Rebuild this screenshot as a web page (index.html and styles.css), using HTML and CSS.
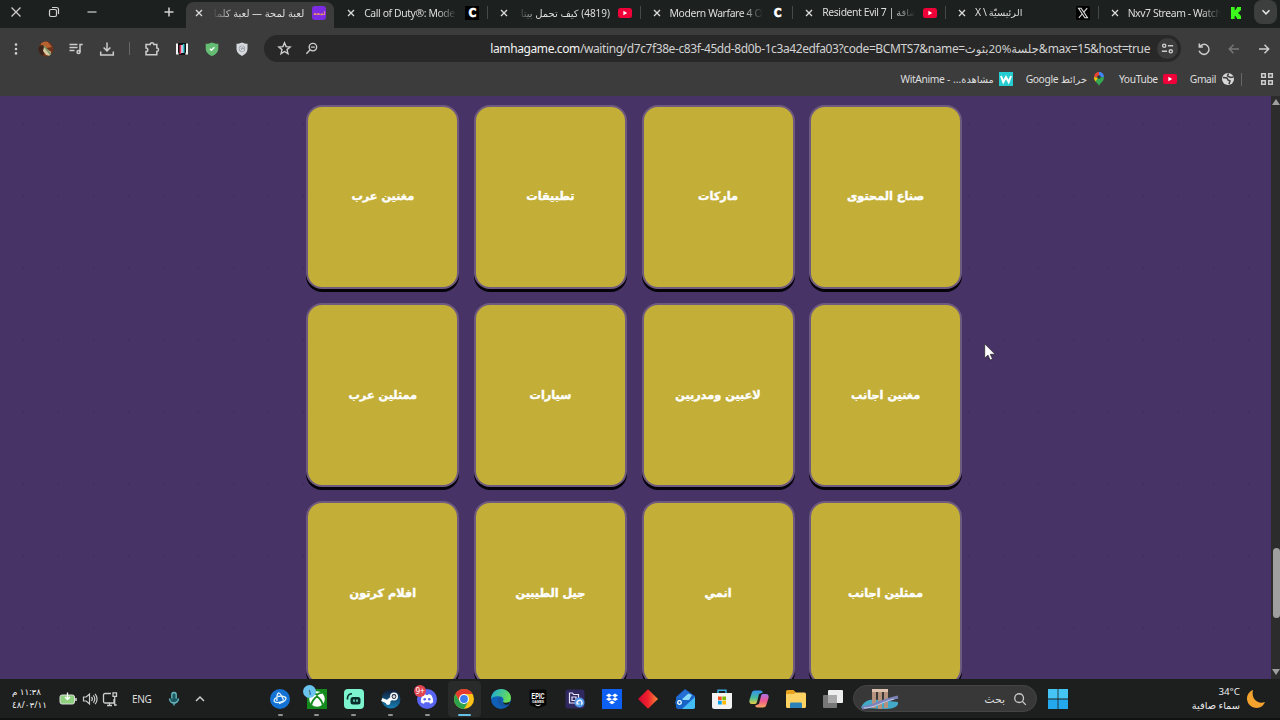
FILE: index.html
```
<!DOCTYPE html>
<html lang="ar">
<head>
  <meta charset="UTF-8" />
  <title>لعبة لمحة — لعبة كلمات</title>
  <meta name="viewport" content="width=device-width, initial-scale=1.0" />
  <link rel="stylesheet" href="styles.css">
</head>
<body>

<!-- Tab strip -->
<header class="tab-strip">
  <div class="window-controls">
    <svg width="12" height="12" viewBox="0 0 12 12"><path d="M1.5 1.5l9 9M10.5 1.5l-9 9"/></svg>
    <svg width="12" height="12" viewBox="0 0 12 12"><rect x="1.5" y="3.5" width="7" height="7" rx="1.5"/><path d="M4 1.5h4.5a2 2 0 0 1 2 2V8"/></svg>
    <svg width="12" height="12" viewBox="0 0 12 12"><path d="M1.5 6h9"/></svg>
    <svg class="new-tab" width="12" height="12" viewBox="0 0 12 12"><path d="M6 1.5v9M1.5 6h9"/></svg>
  </div>
  <nav class="tabs">
    <div class="tab active">
      <svg class="close" viewBox="0 0 8 8"><path d="M1 1l6 6M7 1l-6 6"/></svg>
      <span class="title rtl" dir="rtl">لعبة لمحة — لعبة كلما</span>
      <span class="favicon lamha" dir="rtl">لمحة</span>
    </div>
    <div class="tab">
      <svg class="close" viewBox="0 0 8 8"><path d="M1 1l6 6M7 1l-6 6"/></svg>
      <span class="title">Call of Duty®: Mode</span>
      <span class="favicon cod">C</span>
    </div>
    <div class="tab">
      <svg class="close" viewBox="0 0 8 8"><path d="M1 1l6 6M7 1l-6 6"/></svg>
      <span class="title rtl" dir="rtl">(4819) كيف تحمل بيتا</span>
      <svg class="favicon" viewBox="0 0 14 14"><rect y="2" width="14" height="10" rx="2.5" fill="#f00039"/><path d="M5.4 4.8v4.4L9.2 7z" fill="#fff"/></svg>
    </div>
    <div class="tab">
      <svg class="close" viewBox="0 0 8 8"><path d="M1 1l6 6M7 1l-6 6"/></svg>
      <span class="title">Modern Warfare 4 O</span>
      <span class="favicon cod plain">C</span>
    </div>
    <div class="tab">
      <svg class="close" viewBox="0 0 8 8"><path d="M1 1l6 6M7 1l-6 6"/></svg>
      <span class="title">Resident Evil 7 | <span class="ar">ضافة</span></span>
      <svg class="favicon" viewBox="0 0 14 14"><rect y="2" width="14" height="10" rx="2.5" fill="#f00039"/><path d="M5.4 4.8v4.4L9.2 7z" fill="#fff"/></svg>
    </div>
    <div class="tab">
      <svg class="close" viewBox="0 0 8 8"><path d="M1 1l6 6M7 1l-6 6"/></svg>
      <span class="title">X \ <span class="ar">الرئيسيّة</span></span>
      <svg class="favicon" viewBox="0 0 14 14"><rect width="14" height="14" rx="1.5" fill="#000"/><path d="M2.5 2.2h2.6l6.4 9.6H8.9z" fill="none" stroke="#ddd" stroke-width="1.1"/><path d="M11.2 2.2L7.8 6.2M6.2 8L2.8 11.8" stroke="#ddd" stroke-width="1.1"/></svg>
    </div>
    <div class="tab last">
      <svg class="close" viewBox="0 0 8 8"><path d="M1 1l6 6M7 1l-6 6"/></svg>
      <span class="title">Nxv7 Stream - Watch</span>
      <svg class="favicon" viewBox="0 0 14 14"><path d="M2 1h3.600v3h1.200V2.500H8V1h4v3.500h-1.300V6H9.500v2h1.200v1.500H12V13H8v-1.500H6.800V10H5.600v3H2z" fill="#3bfa1c"/></svg>
    </div>
  </nav>
  <button class="tab-search"><svg width="10" height="10" viewBox="0 0 10 10"><path d="M1.500 3.300L5 6.800l3.500-3.500"/></svg></button>
</header>

<!-- Toolbar -->
<div class="toolbar">
  <div class="tools">
    <svg viewBox="0 0 16 16"><g fill="#ccc"><circle cx="8" cy="3.600" r="1.300"/><circle cx="8" cy="8" r="1.300"/><circle cx="8" cy="12.400" r="1.300"/></g></svg>
    <svg viewBox="0 0 16 16"><clipPath id="av"><circle cx="8" cy="8" r="7.500"/></clipPath><g clip-path="url(#av)"><path fill="#6d321c" d="M0 0h16v16H0z"/><path fill="#b8622f" d="M3 0h6l5 6-5 1-6-3z"/><path fill="#3a241a" d="M0 6l5-2 3 4-4 8H0z"/><path fill="#d8c9a0" d="M6 6l3 2 4 3-1 4-4-1-3-4z"/><path stroke="#739365" stroke-width="1.500" d="M6 5l7 9"/></g></svg>
    <svg class="line" viewBox="0 0 16 16"><path d="M1.500 3.500h8M1.500 6.500h8M1.500 9.500h5M12 11V3.500h2.700"/><circle cx="10.500" cy="11" r="1.500"/></svg>
    <svg class="line" viewBox="0 0 16 16"><path d="M8 1.500v8.300M4.600 6.500L8 9.900l3.400-3.400M1.700 10.500V14h12.600v-3.500"/></svg>
  </div>
  <i class="divider"></i>
  <div class="tools">
    <svg class="line" viewBox="0 0 16 16"><path d="M2 3.500h4.200a1.800 1.800 0 0 1 3.600 0h3V7a1.700 1.700 0 0 1 0 3.400v3.400H2v-3.300a1.800 1.800 0 0 0 0-3.600z"/></svg>
    <svg viewBox="0 0 16 16"><path fill="#f4f4f4" d="M2 2.500h12v11H2z"/><path fill="#111" d="M4 2h8v9l-1 3H5l-1-3z"/><path fill="#e32f61" d="M5.500 4h1.700v9H5.500z"/><path fill="#31c5d9" d="M8.800 3h1.700v9H8.800z"/><path fill="#eef" d="M7.200 4h1.600v8H7.200z"/></svg>
    <svg viewBox="0 0 16 16"><path fill="#64bd72" d="M8 1.500c2 1 4 1.300 6.300 1.300v4.700c0 3.500-2.500 6-6.300 7.500-3.800-1.500-6.300-4-6.300-7.500V2.800C4 2.800 6 2.500 8 1.500z"/><path d="M5.800 7.700l1.600 1.600 3-3" fill="none" stroke="#fff" stroke-width="1.300"/></svg>
    <svg viewBox="0 0 16 16"><path fill="#d5d8dc" d="M8 1.500c2 .9 3.500 1.200 5.500 1.200v5c0 3.300-2 5.600-5.500 7.200-3.500-1.600-5.500-3.900-5.500-7.200v-5C4.500 2.700 6 2.400 8 1.500z"/><circle cx="8" cy="7.700" r="3.200" fill="#a3a8ae"/><path d="M9.800 6.500a2 2 0 1 0 0 2.400H8" fill="none" stroke="#e5e7ea"/></svg>
  </div>
  <div class="address-bar">
    <svg class="line" viewBox="0 0 16 16"><path d="M8 2l1.700 4 4.300.4-3.300 2.800 1 4.300L8 11.200l-3.700 2.300 1-4.300L2 6.400 6.300 6z"/></svg>
    <svg class="line" viewBox="0 0 16 16"><circle cx="9.500" cy="6.500" r="4"/><path d="M6.600 9.400L2.500 13.500M7.500 6.500h4"/></svg>
    <div class="url"><b>lamhagame.com</b>/waiting/d7c7f38e-c83f-45dd-8d0b-1c3a42edfa03?code=BCMTS7&amp;name=<span class="ar">جلسة%20بثوث</span>&amp;max=15&amp;host=true</div>
    <span class="site-info"><svg class="line" viewBox="0 0 16 16"><circle cx="4.500" cy="5" r="1.700"/><path d="M8.500 5H14M2 11h5.500"/><circle cx="11.500" cy="11" r="1.700"/></svg></span>
  </div>
  <div class="tools nav-tools">
    <svg class="line" viewBox="0 0 16 16"><path d="M3.300 2.500v3.600h3.600M3.600 6A5 5 0 1 1 3.200 9.700"/></svg>
    <svg class="line dim" viewBox="0 0 16 16"><path d="M13 8H3.500M7.500 3.800L3.300 8l4.200 4.200"/></svg>
    <svg class="line" viewBox="0 0 16 16"><path d="M3 8h9.500M8.500 3.800L12.700 8l-4.200 4.200"/></svg>
  </div>
</div>

<!-- Bookmarks -->
<div class="bookmarks">
  <a class="bm-wit"><span dir="rtl"><span class="ar">مشاهدة</span>... - WitAnime</span><svg viewBox="0 0 14 14"><path fill="#25cdd0" d="M0 0h14v14H0z"/><path d="M2 4l2.300 6L7 5l2.700 5L12 4" fill="none" stroke="#fff" stroke-width="2"/></svg></a>
  <a class="bm-maps"><span dir="rtl"><span class="ar">خرائط</span> Google</span><svg viewBox="0 0 14 14"><path fill="#34a853" d="M7 14C6.300 11 2 9.500 2 5.200L7 5l5 .2C12 9.500 7.700 11 7 14z"/><path fill="#4285f4" d="M7 0a5 5 0 0 1 4.400 2.800L7 6z"/><path fill="#ea4335" d="M2 5A5 5 0 0 1 7 0v5z"/><path fill="#fbbc04" d="M2 5l4 1-2.500 3.500C2.500 8 2 7 2 5z"/><path fill="#4285f4" d="M7 0a5 5 0 0 1 5 5H7z"/><circle cx="7" cy="5" r="1.800" fill="#333"/></svg></a>
  <a class="bm-yt"><span>YouTube</span><svg viewBox="0 0 14 14"><rect y="2" width="14" height="10" rx="2" fill="#ef0038"/><path d="M5.400 4.800v4.400L9.200 7z" fill="#fff"/></svg></a>
  <a class="bm-gmail"><span>Gmail</span><svg viewBox="0 0 14 14"><circle cx="7" cy="7" r="6" fill="#d7d7d7"/><path d="M2 5.500l4 .5 1 2 2 1-1 3M7.500 1.500L6.500 4l3 1.500 3-.5" fill="none" stroke="#3c3c3c" stroke-width="1.500"/></svg></a>
  <i class="divider"></i>
  <svg class="apps line" viewBox="0 0 14 14"><path d="M1.700 1.700h3.600v3.600H1.700zM8.700 1.700h3.600v3.600H8.700zM1.700 8.700h3.600v3.600H1.700zM8.700 8.700h3.600v3.600H8.700z"/></svg>
</div>

<!-- Game page -->
<main class="page">
  <div class="board">
    <div class="categories" dir="rtl">
      <div class="card">صناع المحتوى</div>
      <div class="card">ماركات</div>
      <div class="card">تطبيقات</div>
      <div class="card">مغنين عرب</div>
      <div class="card">مغنين اجانب</div>
      <div class="card">لاعبين ومدربين</div>
      <div class="card">سيارات</div>
      <div class="card">ممثلين عرب</div>
      <div class="card">ممثلين اجانب</div>
      <div class="card">انمي</div>
      <div class="card">جيل الطيبين</div>
      <div class="card">افلام كرتون</div>
    </div>
  </div>
  <div class="scrollbar">
    <span class="arrow up"></span>
    <span class="thumb"></span>
    <span class="arrow down"></span>
  </div>
  <svg class="cursor" viewBox="0 0 12 18"><path d="M.7.800v14.400l3.300-3.100 2.200 5 2.300-1-2.200-4.800h4.800z" fill="#fff" stroke="#222" stroke-width=".7"/></svg>
</main>

<!-- Taskbar -->
<footer class="taskbar">
  <div class="tray">
    <div class="clock"><span dir="rtl">١١:٣٨ م</span><span>٤٨/٠٣/١١</span></div>
    <svg class="battery" viewBox="0 0 18 16"><rect x="1" y="4" width="14.500" height="9" rx="2" fill="#8ed17f" stroke="#ddd"/><path d="M17 7v3" stroke="#ddd" stroke-width="1.500"/><path d="M8.500 1.500v7M6 6l2.500 2.500L11 6" fill="none" stroke="#fff" stroke-width="1.300"/></svg>
    <svg class="line volume" viewBox="0 0 16 16"><path d="M1.500 6v4h2.700L7.500 13V3L4.200 6zM9.500 6a3 3 0 0 1 0 4M11.300 4.300a5.300 5.300 0 0 1 0 7.400M13 2.800a7.500 7.500 0 0 1 0 10.400"/></svg>
    <svg class="line network" viewBox="0 0 16 16"><path d="M9 2.500H3a1.500 1.500 0 0 0-1.500 1.500v6.500A1.500 1.500 0 0 0 3 12h9V8M5 14.500h5M7.500 12v2.500M11 1.800h3.500v3.500H11zM12.700 5.300V14h2"/></svg>
    <span class="lang">ENG</span>
    <svg class="mic" viewBox="0 0 16 16"><rect x="5.800" y="1.500" width="4.400" height="8.500" rx="2.200"/><path d="M3.500 7.500a4.500 4.500 0 0 0 9 0M8 12v2.500"/></svg>
    <svg class="line chevron" viewBox="0 0 16 16"><path d="M4 10l4-4 4 4"/></svg>
  </div>
  <div class="apps-row">
    <div class="app running">
      <svg viewBox="0 0 20 20"><circle cx="10" cy="10" r="10" fill="#1472d5"/><g fill="none" stroke="#e8f7ff" stroke-width="1.300"><path d="M7 12C6.500 7 7.500 3.500 9 4s4 5 4.500 7.500"/><path d="M7.500 7.500c4-1 8.500 0 8.500 2s-4 4.500-7 5"/><path d="M6.500 8.500C4 10 3.500 12 5 13s6 .5 8.500-1"/></g></svg>
    </div>
    <div class="app running">
      <svg viewBox="0 0 20 20"><path fill="#158a1c" d="M0 0h20v20H0z"/><circle cx="10" cy="10" r="7.800" fill="#fff"/><path d="M4.500 4.200c2-.8 4 .3 5.500 1.600 1.500-1.300 3.500-2.400 5.500-1.600M4.300 15.700C5 12.500 8 9 10 7.600c2 1.400 5 4.900 5.700 8.100" fill="none" stroke="#158a1c" stroke-width="1.800"/></svg>
      <span class="badge blue">١</span>
    </div>
    <div class="app running">
      <svg viewBox="0 0 20 20"><rect width="20" height="20" rx="4" fill="#7cf4cd"/><rect x="6.500" y="8" width="10" height="7.500" rx="2.500" fill="#092d2a"/><path d="M3.500 10.500V9A4.500 4.500 0 0 1 8 4.700" fill="none" stroke="#092d2a" stroke-width="1.600"/><path d="M10 10.500v2.300M13 10.500v2.300" stroke="#7cf4cd" stroke-width="1.500"/></svg>
    </div>
    <div class="app running">
      <svg viewBox="0 0 20 20"><defs><linearGradient id="st" x2="0" y2="1"><stop stop-color="#101b35"/><stop offset="1" stop-color="#187fb5"/></linearGradient></defs><circle cx="10" cy="10" r="9.500" fill="url(#st)"/><path d="M.8 10.500l5.500 2.300 4-3.300" fill="none" stroke="#fff" stroke-width="3.500"/><circle cx="13" cy="7.500" r="3.200" fill="#17243d" stroke="#fff" stroke-width="1.500"/><circle cx="13" cy="7.500" r="1.500" fill="#ddd"/><circle cx="7" cy="13.500" r="2.400" fill="#fff"/></svg>
    </div>
    <div class="app running">
      <svg viewBox="0 0 20 20"><circle cx="10" cy="10" r="10" fill="#5865f2"/><path fill="#fff" d="M5.800 5.900l2.500-.9.600 1h2.200l.6-1 2.500.9c1.500 2.200 2.100 4.800 1.900 7.300-1 .8-2 1.300-3 1.500l-.9-1.400H7.800l-.9 1.400c-1-.2-2-.7-3-1.500-.2-2.500.4-5.100 1.900-7.300z"/><circle cx="7.700" cy="10.300" r="1.300" fill="#5865f2"/><circle cx="12.300" cy="10.300" r="1.300" fill="#5865f2"/></svg>
      <span class="badge red">9+</span>
    </div>
    <div class="app focused">
      <svg viewBox="0 0 20 20"><circle cx="10" cy="10" r="10" fill="#fbc116"/><path fill="#e33b2e" d="M1.340 5A10 10 0 0 1 18.660 5H10l-4.330 7.500z"/><path fill="#2ba24c" d="M1.340 5A10 10 0 0 0 10 20l4.330-7.500-8.660 0z"/><circle cx="10" cy="10" r="5" fill="#fff"/><circle cx="10" cy="10" r="3.900" fill="#3b7ded"/></svg>
    </div>
    <div class="app">
      <svg viewBox="0 0 20 20"><defs><linearGradient id="ed" x2="1" y2=".3"><stop stop-color="#19a7df"/><stop offset="1" stop-color="#67de56"/></linearGradient></defs><circle cx="10" cy="10" r="10" fill="#0f61b8"/><path fill="url(#ed)" d="M0 10C.5 3.500 5 0 10 0c6 0 10 4.500 10 9 0 3.500-2.500 5-5 5-2 0-3.300-.7-3-1.500 1.500-2 0-5-3-5C5 7 1 8 0 10z"/><path fill="#1554a0" d="M8.500 8C6 10 6 15 10 17c3 1.300 6 .5 8-1.500-4 1-7.500-.5-8-3-.2-1.500.7-2 .3-3.300z"/><path fill="#1f1f1f" d="M11.800 12.700c1 1.600 4.200 1.500 7.200 0l-1 2.500c-3 1-6 .3-6.200-2.500z"/></svg>
    </div>
    <div class="app">
      <svg class="epic" viewBox="0 0 20 20"><path fill="#070707" d="M1.500 2A1.500 1.500 0 0 1 3 .500h14A1.500 1.500 0 0 1 18.500 2v14L10 19.500 1.500 16z"/><text x="10" y="9.800" textLength="13" lengthAdjust="spacingAndGlyphs">EPIC</text><text class="small" x="10" y="14" textLength="12" lengthAdjust="spacingAndGlyphs">GAMES</text><path d="M7.500 15.800l2.500 1 2.500-1" fill="none" stroke="#eee"/></svg>
    </div>
    <div class="app">
      <svg viewBox="0 0 20 20"><rect x=".5" y=".5" width="19" height="19" rx="2.500" fill="#302960"/><path d="M4.500 4h3l1 1.500h5V14h-9zM7 8h4v3.500H7z" fill="none" stroke="#e8e5ff" stroke-width="1.200"/><circle cx="14.500" cy="13.500" r="5" fill="#5298e8"/><path d="M12.500 14.800a2.400 2.400 0 1 1 3.600.8M12 12.500v2.500h2.500" fill="none" stroke="#fff" stroke-width="1.200"/></svg>
    </div>
    <div class="app">
      <svg viewBox="0 0 20 20"><path fill="#0e60f3" d="M0 0h20v20H0z"/><path fill="#fff" d="M7 4.500l3 1.900-3 1.900-3-1.900zM13 4.500l3 1.900-3 1.900-3-1.900zM7 8.300l3 1.900-3 1.900-3-1.900zM13 8.300l3 1.900-3 1.900-3-1.900zM10 11.500l3 1.900-3 1.900-3-1.900z"/></svg>
    </div>
    <div class="app">
      <svg viewBox="0 0 20 20"><defs><linearGradient id="dm"><stop stop-color="#cf0832"/><stop offset=".5" stop-color="#f0202c"/><stop offset="1" stop-color="#f58a3a"/></linearGradient></defs><path fill="url(#dm)" d="M10 .3L20 10l-10 9.700L0 10z"/></svg>
    </div>
    <div class="app">
      <svg viewBox="0 0 20 20"><path fill="#1b63c6" d="M1 8l9-8 10 7v11a2 2 0 0 1-2 2H3a2 2 0 0 1-2-2z"/><path fill="#8bdcfa" d="M4 8l6-5 7 3-3 5H5z"/><path fill="#236fd5" d="M2 8l8-7 4 3-9 8z"/><path fill="#43bdf5" d="M20 8v10a2 2 0 0 1-2 2H7z"/><circle cx="4.500" cy="13.500" r="4.300" fill="#1268c9"/><circle cx="4.500" cy="13.500" r="1.800" fill="none" stroke="#fff" stroke-width="1.300"/></svg>
    </div>
    <div class="app">
      <svg viewBox="0 0 20 20"><path d="M6 4V1.300h8V4" fill="none" stroke="#37a9df" stroke-width="1.500"/><path fill="#f3f3f3" d="M0 4h20v13.500a2.500 2.500 0 0 1-2.500 2.500h-15A2.500 2.500 0 0 1 0 17.500z"/><path fill="#f25022" d="M6 7.500h3.700v3.700H6z"/><path fill="#7fba00" d="M10.300 7.500H14v3.700h-3.700z"/><path fill="#00a4ef" d="M6 11.800h3.700v3.700H6z"/><path fill="#ffb900" d="M10.300 11.800H14v3.700h-3.700z"/></svg>
    </div>
    <div class="app">
      <svg viewBox="0 0 20 20"><defs><linearGradient id="c1" x2="0" y2="1"><stop stop-color="#3393f0"/><stop offset=".55" stop-color="#48bd9a"/><stop offset="1" stop-color="#e4cf40"/></linearGradient><linearGradient id="c2" x2="0" y2="1"><stop stop-color="#a972e8"/><stop offset=".5" stop-color="#ef5991"/><stop offset="1" stop-color="#f8a65e"/></linearGradient></defs><path fill="url(#c1)" d="M6 1.500h5.500c1.500 0 2 1 2.300 2L10 5 8 13c-.4 1.500-1.200 2-2.500 2H3c-2.500 0-3-2-2.500-4l2.200-7C3.200 2.300 4.300 1.500 6 1.500z"/><path fill="url(#c2)" d="M14 18.500H8.500c-1.500 0-2-1-2.300-2L10 15l2-8c.4-1.500 1.200-2 2.500-2H17c2.500 0 3 2 2.500 4l-2.200 7c-.5 1.700-1.600 2.500-3.300 2.500z"/></svg>
    </div>
    <div class="app">
      <svg viewBox="0 0 20 20"><path fill="#e8a21d" d="M0 2.500A1.500 1.500 0 0 1 1.500 1h6L10 3.500V9H0z"/><path fill="#fdd263" d="M0 5h8l2-1.500h8.500A1.500 1.500 0 0 1 20 5v12.500a1.500 1.500 0 0 1-1.500 1.500h-17A1.500 1.500 0 0 1 0 17.500z"/><path fill="#2c83ba" d="M4 19v-4.500a1 1 0 0 1 1-1h10a1 1 0 0 1 1 1V19z"/></svg>
    </div>
    <div class="app">
      <svg viewBox="0 0 20 20"><rect y="6" width="14" height="13" rx="1" fill="#777"/><rect x="5" y="1" width="15" height="13" rx="1" fill="#eee"/><path fill="#aaa" d="M5 6h9v8H5z"/></svg>
    </div>
  </div>
  <div class="search">
    <svg class="art" viewBox="0 0 40 22"><path fill="#43a9c9" d="M1 20c2-7 9-10 18-8l19 2c1 4-4 7-12 7z"/><path fill="#b6927e" d="M12 2h4v18h-4zM18 1h4v20h-4zM24 2h4v18h-4z"/><path fill="#dec2ad" d="M12 1h16v3H12z"/><path d="M2 20C12 19 20 13 38 9" fill="none" stroke="#7c83bb" stroke-width="3"/><path d="M4 20c10 0 18-6 30-9" fill="none" stroke="#c4cce9"/></svg>
    <span>بحث</span>
    <svg class="line" viewBox="0 0 16 16"><circle cx="7" cy="7" r="5"/><path d="M10.700 10.700l4 4"/></svg>
  </div>
  <svg class="start" viewBox="0 0 20 20"><path fill="#45c5f5" d="M0 0h9.600v9.600H0zM10.400 0H20v9.600h-9.600z"/><path fill="#23a8ee" d="M0 10.400h9.600V20H0zM10.400 10.400H20V20h-9.600z"/></svg>
  <div class="weather">
    <div class="forecast"><span>34°C</span><span dir="rtl">سماء صافية</span></div>
    <svg viewBox="0 0 20 20"><path fill="#f3a32e" d="M7 1C2 3 0 7.500 1.500 12.500S9 20 13.500 18.500c2.500-.8 4.500-3 5.500-5.500-4 1.500-8 .5-10.300-2.500S6.300 4 7 1z"/></svg>
  </div>
</footer>

</body>
</html>
```

FILE: styles.css
```
* {
  box-sizing: border-box;
}

body {
  margin: 0;
  width: 1280px;
  height: 720px;
  overflow: hidden;
  display: flex;
  flex-direction: column;
  background: #3c3c3c;
  color: #dedede;
  font-family: "Noto Sans", "DejaVu Sans", sans-serif;
  font-size: 11px;
}

svg {
  display: block;
  flex: none;
}

.line {
  fill: none;
  stroke: #ccc;
  stroke-width: 1.5;
}

.divider {
  width: 1px;
  height: 13px;
  background: #666;
}

/* tabs */
.tab-strip {
  height: 28px;
  flex: none;
  display: flex;
  background: #1c201f;
}

.window-controls {
  width: 182.5px;
  padding: 6px 7.5px 0 10px;
  display: flex;
  gap: 26px;
  fill: none;
  stroke: #d2d2d2;
  stroke-width: 1.2;
}

.new-tab {
  margin-left: auto;
  stroke-width: 1.5;
}

.tabs {
  display: grid;
  grid-template-columns: repeat(7, 152.7px);
}

.tab {
  display: flex;
  align-items: center;
  padding: 0 8.5px 3px 12px;
  background: linear-gradient(#474a49, #474a49) right 6px / 1px 13px no-repeat;
}

.tab.last {
  background: none;
}

.tab.active {
  margin: 2px 1px 0 3px;
  padding: 0 8px 5px 9px;
  background: #3c3c3c;
  border-radius: 8px 8px 0 0;
}

.close {
  width: 8px;
  height: 8px;
  fill: none;
  stroke: #ddd;
  stroke-width: 1.3;
}

.title {
  flex: 1;
  width: 0;
  margin: 0 8px 0 9px;
  font-size: 10.4px;
  letter-spacing: -0.4px;
  line-height: 20px;
  white-space: nowrap;
  overflow: hidden;
  -webkit-mask-image: linear-gradient(to left, transparent, #000 20px);
  mask-image: linear-gradient(to left, transparent, #000 20px);
}

/* negative tracking would break the joined letters */
.ar {
  letter-spacing: 0;
}

.title.rtl {
  font-size: 10px;
  letter-spacing: 0;
  -webkit-mask-image: linear-gradient(to right, transparent, #000 20px);
  mask-image: linear-gradient(to right, transparent, #000 20px);
}

.title .ar {
  font-size: 9.8px;
}

.favicon {
  width: 14px;
  height: 14px;
}

.lamha {
  border-radius: 3px;
  background: #7d2be3;
  color: #f0a05a;
  font-size: 5px;
  font-weight: bold;
  line-height: 14px;
  text-align: center;
}

.cod {
  background: #000;
  color: #fff;
  font: bold 12px/14px "DejaVu Sans Condensed", "DejaVu Sans", sans-serif;
  -webkit-text-stroke: 0.5px #fff;
  text-align: center;
}

.cod.plain {
  background: none;
}

.tab-search {
  width: 23px;
  height: 24px;
  margin-left: 3px;
  padding: 0;
  border: 0;
  border-radius: 8px;
  display: grid;
  place-items: center;
  background: #3c3f3e;
  fill: none;
  stroke: #e2e2e2;
  stroke-width: 1.6;
}

/* toolbar */
.toolbar {
  height: 41px;
  flex: none;
  display: flex;
  align-items: center;
  padding-left: 1px;
}

.tools {
  display: flex;
}

.tools svg {
  width: 16px;
  height: 16px;
  margin: 0 7.1px;
}

.toolbar .divider {
  margin: 0 7px;
}

.address-bar {
  width: 917px;
  height: 27px;
  margin-left: 6px;
  padding: 0 3px 0 13px;
  display: flex;
  align-items: center;
  gap: 12px;
  border-radius: 14px;
  background: #282828;
}

.address-bar svg {
  width: 15px;
  height: 15px;
}

.url {
  margin-left: auto;
  margin-right: -5.5px;
  font-size: 12px;
  letter-spacing: -0.4px;
  line-height: 20px;
  white-space: nowrap;
  color: #d2d2d2;
}

.url .ar {
  font-size: 11.6px;
}

.url b {
  font-weight: normal;
  color: #f4f4f4;
}

.site-info {
  width: 21px;
  height: 21px;
  border-radius: 50%;
  background: #3c3c3c;
  display: grid;
  place-items: center;
}

.nav-tools {
  margin-left: 8px;
}

.dim {
  stroke: #777;
}

/* bookmarks */
.bookmarks {
  height: 27px;
  flex: none;
  display: flex;
  align-items: center;
  justify-content: flex-end;
  padding: 0 6px 7px 0;
  font-size: 10.3px;
  letter-spacing: -0.4px;
}

.bookmarks .ar {
  font-size: 9.8px;
}

.bookmarks a {
  display: flex;
  align-items: center;
  gap: 5px;
  margin-right: 13px;
}

.bookmarks a svg {
  width: 14px;
  height: 14px;
}

.bookmarks .bm-gmail {
  margin-right: 6px;
}

.bookmarks .apps {
  width: 14px;
  height: 14px;
  margin-left: 18px;
}

/* page */
.page {
  position: relative;
  height: 583px;
  flex: none;
  display: flex;
  overflow: hidden;
  background: #483366;
}

.board {
  flex: 1;
  padding: 8.7px 0 0 306.3px;
  background: radial-gradient(circle, #402d5b 0.6px, transparent 1.2px) 6px 10px / 35px 36px;
}

.categories {
  width: 655.8px;
  display: grid;
  grid-template-columns: repeat(4, 153px);
  grid-auto-rows: 184px;
  gap: 14.4px 14.6px;
}

.card {
  display: flex;
  align-items: center;
  justify-content: center;
  border: 2px solid #705b80;
  border-radius: 16px;
  background: #c3ae37;
  box-shadow: 0 3px 0 #05020a;
  color: #fff;
  font: bold 11.3px "DejaVu Sans", sans-serif;
  -webkit-text-stroke: 0.4px #fff;
}

.scrollbar {
  width: 9px;
  display: flex;
  flex-direction: column;
  align-items: flex-end;
  background: #2c2c2c;
}

.thumb {
  width: 7px;
  height: 70px;
  margin-top: 443px;
  border-radius: 4px;
  background: #9f9f9f;
}

.arrow {
  border: 4px solid transparent;
}

.arrow.up {
  margin-top: 3px;
  border-top-width: 0;
  border-bottom: 6px solid #9f9f9f;
}

.arrow.down {
  margin-top: 51px;
  border-bottom-width: 0;
  border-top: 6px solid #9f9f9f;
}

.cursor {
  position: absolute;
  left: 984px;
  top: 247px;
  width: 12px;
  height: 18px;
}

/* taskbar */
.taskbar {
  height: 41px;
  flex: none;
  display: flex;
  align-items: center;
  background: #1d1e1e;
  border-bottom: 2px solid #121212;
}

.tray {
  width: 261.6px;
  display: flex;
  align-items: center;
  padding-left: 12px;
}

.clock {
  width: 47px;
  display: flex;
  flex-direction: column;
  align-items: flex-start;
  color: #f0f0f0;
  font-size: 8.8px;
  line-height: 13px;
  white-space: nowrap;
}

.battery {
  width: 18px;
  height: 16px;
}

.volume {
  width: 16px;
  height: 16px;
  margin-left: 5px;
  stroke-width: 1.2;
}

.network {
  width: 16px;
  height: 16px;
  margin-left: 4px;
  stroke-width: 1.3;
}

.lang {
  margin-left: 14px;
  width: 34px;
  font-size: 10px;
  letter-spacing: -0.3px;
}

.mic {
  width: 16px;
  height: 16px;
  fill: #1e5961;
  stroke: #69bcc5;
  stroke-width: 1.3;
}

.chevron {
  width: 16px;
  height: 16px;
  margin-left: 10px;
}

.apps-row {
  display: grid;
  grid-template-columns: repeat(16, 36.85px);
}

.app {
  position: relative;
  height: 36px;
  display: grid;
  place-items: center;
  border-radius: 4px;
}

.app svg {
  width: 20px;
  height: 20px;
}

.running::after,
.focused::after {
  content: "";
  position: absolute;
  bottom: 1px;
  width: 5px;
  height: 2px;
  border-radius: 1px;
  background: #909090;
}

.focused {
  margin: 0 2px;
  background: #292b2a;
}

.focused::after {
  width: 13px;
  background: #65bfe7;
}

.badge {
  position: absolute;
  top: 4px;
  left: 5px;
  width: 13px;
  height: 13px;
  border-radius: 50%;
  font-size: 8px;
  line-height: 13px;
  text-align: center;
}

.badge.blue {
  background: #6bc4ee;
  color: #173141;
}

.badge.red {
  width: 12px;
  height: 12px;
  line-height: 12px;
  background: #e04450;
  color: #fff;
}

.epic text {
  fill: #fff;
  font: bold 9px "Liberation Sans", sans-serif;
  text-anchor: middle;
}

.epic .small {
  font-size: 3.5px;
}

.search {
  width: 184px;
  height: 27px;
  margin-left: 2px;
  padding: 0 9px 0 6px;
  display: flex;
  align-items: center;
  gap: 8px;
  border: 1px solid #454545;
  border-radius: 14px;
  background: #383838;
}

.search span {
  margin-left: auto;
  font-size: 11px;
}

.search svg {
  width: 14px;
  height: 14px;
}

.search .art {
  width: 40px;
  height: 22px;
}

.start {
  width: 20px;
  height: 20px;
  margin-left: 11px;
}

.weather {
  margin-left: auto;
  margin-right: 14px;
  display: flex;
  align-items: center;
  gap: 6px;
}

.weather svg {
  width: 20px;
  height: 20px;
}

.forecast {
  display: flex;
  flex-direction: column;
  align-items: flex-end;
  color: #eee;
  font-size: 9.8px;
  line-height: 14px;
}
```
